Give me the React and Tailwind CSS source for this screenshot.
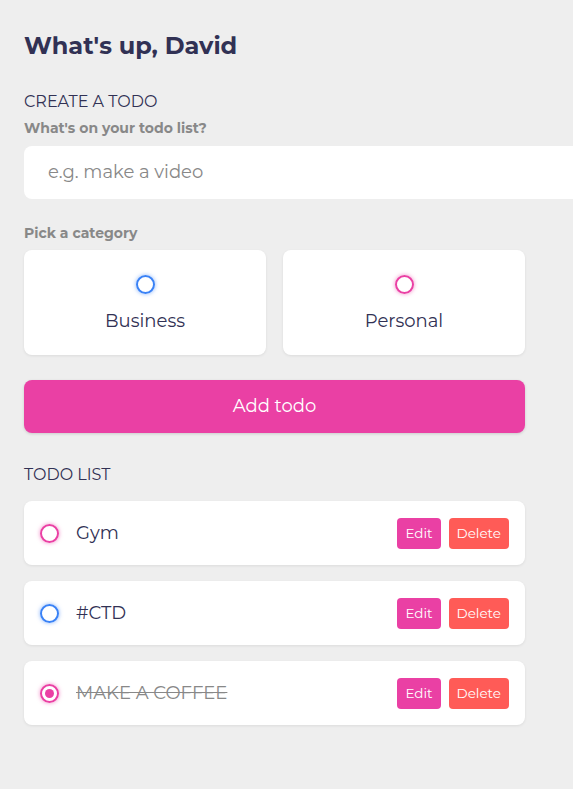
import React from "react";

const todos = [
  { id: 1, text: "Gym", category: "personal", done: false },
  { id: 2, text: "#CTD", category: "business", done: false },
  { id: 3, text: "MAKE A COFFEE", category: "personal", done: true },
];

const Bubble = ({ category, checked }) => {
  const isBiz = category === "business";
  return (
    <span
      className={`flex items-center justify-center w-[19px] h-[19px] rounded-full border-2 ${
        isBiz
          ? "border-[#3a82f6] shadow-[0_0_4px_rgba(58,130,246,0.6)]"
          : "border-[#ea40a4] shadow-[0_0_4px_rgba(234,64,164,0.6)]"
      }`}
    >
      {checked && <span className="w-[9px] h-[9px] rounded-full bg-[#ea40a4]" />}
    </span>
  );
};

export default function App() {
  return (
    <div className="min-h-screen bg-[#eeeeee] overflow-hidden font-['Montserrat','Noto_Sans',sans-serif] text-[#313154]">
      <div className="pl-6 pt-[31px] w-[525px]">
        <h1 className="text-[24px] font-bold leading-[30px]">What's up, David</h1>

        <h2 className="mt-[31px] text-[16px] uppercase leading-5">Create a todo</h2>
        <p className="mt-[7px] text-[14px] font-bold text-[#888888] leading-[18px]">What's on your todo list?</p>
        <div className="mt-[9px] w-[560px] h-[53px] bg-white rounded-lg flex items-center px-6 text-[18px] text-[#888888]">
          e.g. make a video
        </div>

        <p className="mt-[25px] text-[14px] font-bold text-[#888888] leading-[18px]">Pick a category</p>
        <div className="mt-[8px] grid grid-cols-2 gap-[17px]">
          {[
            ["business", "Business"],
            ["personal", "Personal"],
          ].map(([key, label]) => (
            <div
              key={key}
              className="h-[105px] bg-white rounded-lg shadow-[0_1px_3px_rgba(0,0,0,0.08)] flex flex-col items-center pt-[25px]"
            >
              <Bubble category={key} />
              <span className="mt-[16px] text-[18px] leading-[22px]">{label}</span>
            </div>
          ))}
        </div>

        <button className="mt-[25px] w-full h-[53px] rounded-lg bg-[#ea40a4] text-white text-[18px] shadow-[0_1px_3px_rgba(0,0,0,0.15)]">
          Add todo
        </button>

        <h2 className="mt-[32px] text-[16px] uppercase leading-5">Todo list</h2>
        <div className="mt-[16px] flex flex-col gap-4">
          {todos.map((t) => (
            <div
              key={t.id}
              className="h-[64px] bg-white rounded-lg shadow-[0_1px_3px_rgba(0,0,0,0.08)] flex items-center pl-4 pr-4"
            >
              <Bubble category={t.category} checked={t.done} />
              <span
                className={`ml-[17px] flex-1 text-[18px] ${
                  t.done ? "line-through text-[#888888]" : ""
                }`}
              >
                {t.text}
              </span>
              <button className="h-[31px] px-2 rounded bg-[#ea40a4] text-white text-[13.5px]">Edit</button>
              <button className="ml-2 h-[31px] px-2 rounded bg-[#ff5b57] text-white text-[13.5px]">Delete</button>
            </div>
          ))}
        </div>
      </div>
    </div>
  );
}
